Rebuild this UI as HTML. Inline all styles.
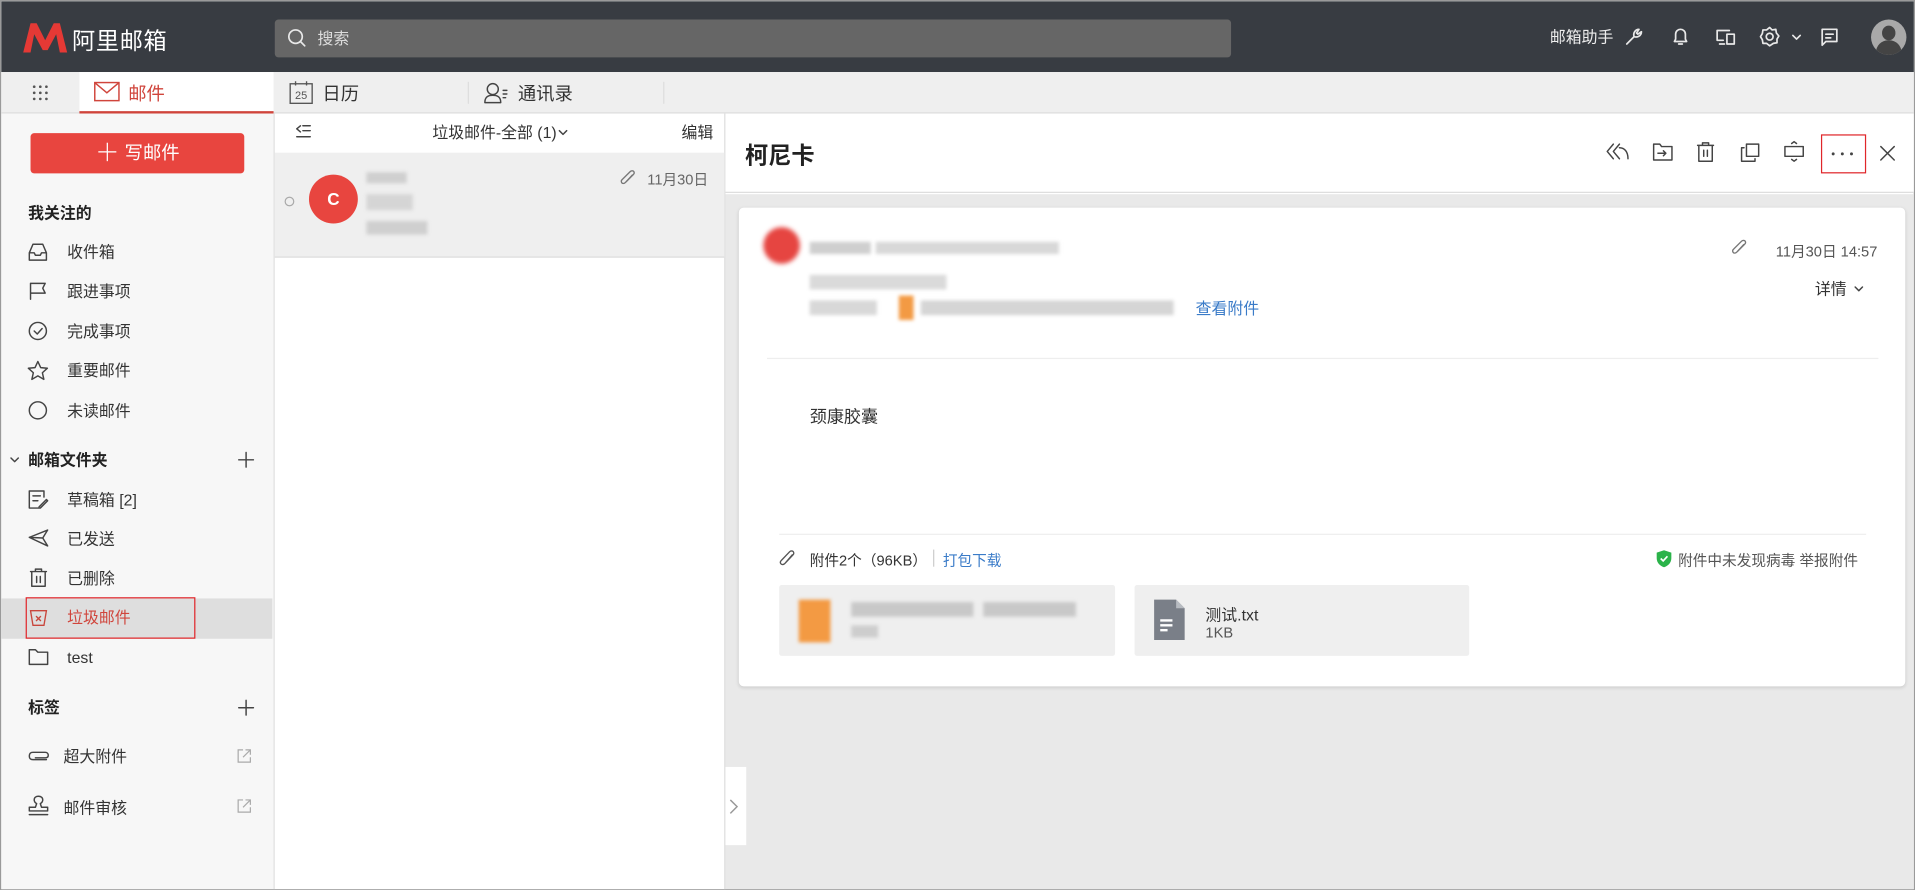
<!DOCTYPE html>
<html><head><meta charset="utf-8"><style>
*{box-sizing:border-box;margin:0;padding:0}
html,body{width:1915px;height:890px;overflow:hidden;background:#fff}
body{font-family:"Liberation Sans","Noto Sans CJK SC",sans-serif;color:#333}
#w{position:absolute;left:0;top:0;width:1568px;height:729px;transform:scale(1.2213);transform-origin:0 0;border:1px solid #9a9a9a;overflow:hidden;background:#fff}
.a{position:absolute}
svg{position:absolute;overflow:visible}
.ic{fill:none;stroke:#444;stroke-width:1.2;stroke-linecap:round;stroke-linejoin:round}
.hi{fill:none;stroke:#e8e8e8;stroke-width:1.4;stroke-linecap:round;stroke-linejoin:round}
.t13{font-size:13px;line-height:16px}
.blur{background:#cfcfcf;filter:blur(1.5px)}
</style></head><body><div id="w">
<!-- header -->
<div class="a" style="left:0;top:0;width:1568px;height:58px;background:#383c42"></div>
<svg style="left:18px;top:18px" width="36" height="24"><path d="M0 24 L6 0 L11 0 L18 14 L25 0 L30 0 L36 24 L30 24 L27 9 L20 22 L16 22 L9 9 L6 24Z" fill="#e53935"/></svg>
<div class="a" style="left:58px;top:18px;color:#fff;font-size:19px;font-weight:normal;letter-spacing:0.5px">阿里邮箱</div>
<div class="a" style="left:224px;top:15px;width:783px;height:31px;background:#666;border-radius:3px"></div>
<svg style="left:234px;top:22px" width="16" height="16"><circle cx="7" cy="7" r="5.5" class="hi"/><path d="M11 11 L14.5 14.5" class="hi"/></svg>
<div class="a t13" style="left:259px;top:23px;color:#ddd">搜索</div>
<div class="a t13" style="left:1268px;top:22px;color:#eee">邮箱助手</div>
<svg style="left:1328px;top:21px" width="16" height="16"><path d="M3 14 L9 8 M9 8 C8 5 10 2 13 2 L11 5 L12 6 L15 4 C15 7 12 9 9 8" class="hi"/></svg>
<svg style="left:1367px;top:21px" width="16" height="16"><path d="M3 12 L13 12 L12 10 L12 6 C12 3.5 10 2 8 2 C6 2 4 3.5 4 6 L4 10Z M6.5 14 L9.5 14" class="hi"/></svg>
<svg style="left:1403px;top:21px" width="18" height="16"><path d="M12 3 L2 3 L2 11 L7 11 M4 14 L8 14 M10 6 L16 6 L16 14 L10 14Z" class="hi"/></svg>
<svg style="left:1439px;top:20px" width="18" height="18"><circle cx="9" cy="9" r="2.8" class="hi"/><path d="M9 1.5 L11 3.5 L14 3 L14.5 6 L16.5 8.5 L15 11 L15 14 L12 14.5 L9 16.5 L6.5 14.5 L3.5 14.5 L3 11.5 L1.5 9 L3 6.5 L3.5 3.5 L6.5 3.5Z" class="hi"/></svg>
<svg style="left:1466px;top:27px" width="8" height="5"><path d="M1 1 L4 4 L7 1" class="hi"/></svg>
<svg style="left:1489px;top:21px" width="16" height="16"><path d="M2 2 L14 2 L14 12 L5 12 L2 15Z M5 6 L11 6 M5 9 L9 9" class="hi"/></svg>
<div class="a" style="left:1531px;top:15px;width:29px;height:29px;border-radius:50%;background:#a9a9a9;overflow:hidden"><div class="a" style="left:9px;top:5px;width:11px;height:12px;border-radius:50%;background:#444"></div><div class="a" style="left:4px;top:17px;width:21px;height:14px;border-radius:10px 10px 0 0;background:#444"></div></div>
<!-- tab row -->
<div class="a" style="left:0;top:58px;width:1568px;height:34px;background:#efefef;border-bottom:1px solid #dcdcdc"></div>
<svg style="left:25px;top:68px" width="14" height="14"><g fill="#555"><circle cx="2" cy="2" r="1.1"/><circle cx="7" cy="2" r="1.1"/><circle cx="12" cy="2" r="1.1"/><circle cx="2" cy="7" r="1.1"/><circle cx="7" cy="7" r="1.1"/><circle cx="12" cy="7" r="1.1"/><circle cx="2" cy="12" r="1.1"/><circle cx="7" cy="12" r="1.1"/><circle cx="12" cy="12" r="1.1"/></g></svg>
<div class="a" style="left:64px;top:58px;width:159px;height:34px;background:#fff;border-bottom:2px solid #d0453c"></div>
<svg style="left:76px;top:66px" width="21" height="16"><rect x="0.6" y="0.6" width="19.8" height="14.8" fill="none" stroke="#d0453c" stroke-width="1.2"/><path d="M1 1 L10.5 9 L20 1" fill="none" stroke="#d0453c" stroke-width="1.2"/></svg>
<div class="a" style="left:104px;top:65px;font-size:15px;color:#d0453c">邮件</div>
<svg style="left:236px;top:65px" width="20" height="20"><rect x="0.6" y="2.6" width="18" height="16" fill="none" stroke="#555" stroke-width="1.1"/><path d="M5 0.5 L5 4 M14 0.5 L14 4" stroke="#555" stroke-width="1.1"/><text x="9.6" y="15" font-size="9" text-anchor="middle" fill="#555" font-family="Liberation Sans">25</text></svg>
<div class="a" style="left:263px;top:65px;font-size:15px;color:#333">日历</div>
<div class="a" style="left:382px;top:66px;width:1px;height:18px;background:#ddd"></div>
<svg style="left:395px;top:66px" width="22" height="18"><circle cx="7.5" cy="6" r="4.5" class="ic" stroke="#555"/><path d="M1 17 C1 12 4 11 7.5 11 C11 11 14 12 14 17Z" class="ic" stroke="#555"/><path d="M16 7 L19 7 M16 10 L19 10 M16 13 L18 13" class="ic"/></svg>
<div class="a" style="left:423px;top:65px;font-size:15px;color:#333">通讯录</div>
<div class="a" style="left:542px;top:66px;width:1px;height:18px;background:#ddd"></div>
<!-- sidebar -->
<div class="a" style="left:0;top:92px;width:224px;height:637px;background:#f7f7f7;border-right:1px solid #ddd"></div>
<div class="a" style="left:24px;top:108px;width:175px;height:33px;background:#e8453f;border-radius:3px;color:#fff;font-size:15px;line-height:33px;text-align:center"><span style="font-size:20px;vertical-align:-2px;font-weight:300">＋</span> 写邮件</div>
<div class="a t13" style="left:22px;top:166px;font-weight:bold;color:#222">我关注的</div>
<svg style="left:22px;top:198px" width="16" height="15"><path d="M1 8 L1 14 L15 14 L15 8 L12 1 L4 1Z M1 8 L5 8 L6 10 L10 10 L11 8 L15 8" class="ic"/></svg>
<div class="a t13" style="left:54px;top:198px">收件箱</div>
<svg style="left:22px;top:230px" width="16" height="15"><path d="M2 14 L2 1 L14 1 L12 5 L14 9 L2 9" class="ic"/></svg>
<div class="a t13" style="left:54px;top:230px">跟进事项</div>
<svg style="left:22px;top:262px" width="16" height="16"><circle cx="8" cy="8" r="7" class="ic"/><path d="M5 8 L7.5 10.5 L11.5 6" class="ic"/></svg>
<div class="a t13" style="left:54px;top:263px">完成事项</div>
<svg style="left:21px;top:294px" width="18" height="17"><path d="M9 1 L11.3 6 L16.8 6.5 L12.7 10.2 L13.9 15.6 L9 12.8 L4.1 15.6 L5.3 10.2 L1.2 6.5 L6.7 6Z" class="ic"/></svg>
<div class="a t13" style="left:54px;top:295px">重要邮件</div>
<svg style="left:22px;top:327px" width="16" height="16"><circle cx="8" cy="8" r="7" class="ic"/></svg>
<div class="a t13" style="left:54px;top:328px">未读邮件</div>
<svg style="left:7px;top:373px" width="8" height="5"><path d="M1 1 L4 4 L7 1" class="ic"/></svg>
<div class="a t13" style="left:22px;top:368px;font-weight:bold;color:#222">邮箱文件夹</div>
<svg style="left:194px;top:369px" width="13" height="13"><path d="M6.5 0.5 L6.5 12.5 M0.5 6.5 L12.5 6.5" class="ic"/></svg>
<svg style="left:22px;top:400px" width="17" height="16"><path d="M10 15 L1 15 L1 1 L13 1 L13 6 M4 5 L10 5 M4 9 L8 9 M9 14 L15 8 L16 9 L10 15 L9 15Z" class="ic"/></svg>
<div class="a t13" style="left:54px;top:401px">草稿箱 [2]</div>
<svg style="left:22px;top:432px" width="17" height="15"><path d="M16 1 L1 7 L16 14 L12 7.5Z M1 7 L12 7.5" class="ic"/></svg>
<div class="a t13" style="left:54px;top:433px">已发送</div>
<svg style="left:23px;top:464px" width="15" height="16"><path d="M1 3 L14 3 M5 3 L5 1 L10 1 L10 3 M2 3 L2 15 L13 15 L13 3 M6 7 L6 12 M9 7 L9 12" class="ic"/></svg>
<div class="a t13" style="left:54px;top:465px">已删除</div>
<div class="a" style="left:0;top:489px;width:222px;height:33px;background:#dedede"></div>
<div class="a" style="left:20px;top:488px;width:139px;height:34px;border:1.5px solid #e0262a"></div>
<svg style="left:23px;top:497px" width="15" height="15"><path d="M1 2 L14 2 L12 14 L3 14Z M5.5 6.5 L9.5 10.5 M9.5 6.5 L5.5 10.5" fill="none" stroke="#c9463c" stroke-width="1.1"/></svg>
<div class="a t13" style="left:54px;top:497px;color:#d0453c">垃圾邮件</div>
<svg style="left:22px;top:530px" width="17" height="14"><path d="M1 1 L6 1 L8 3 L16 3 L16 13 L1 13Z" class="ic"/></svg>
<div class="a t13" style="left:54px;top:530px">test</div>
<div class="a t13" style="left:22px;top:571px;font-weight:bold;color:#222">标签</div>
<svg style="left:194px;top:572px" width="13" height="13"><path d="M6.5 0.5 L6.5 12.5 M0.5 6.5 L12.5 6.5" class="ic"/></svg>
<svg style="left:22px;top:612px" width="18" height="12"><path d="M15 9 L4 9 C2 9 1 8 1 6 C1 4 2 3 4 3 L14 3 C15.5 3 16.5 4 16.5 5.5 C16.5 7 15.5 7.5 14 7.5 L6 7.5" class="ic"/></svg>
<div class="a t13" style="left:51px;top:611px">超大附件</div>
<svg style="left:193px;top:612px" width="12" height="12"><path d="M5 1 L1 1 L1 11 L11 11 L11 7 M7 1 L11 1 L11 5 M11 1 L5 7" fill="none" stroke="#aaa" stroke-width="1"/></svg>
<svg style="left:22px;top:650px" width="17" height="17"><path d="M1 16 L16 16 M1 13 L16 13 L16 10 L11 10 L10 7 C11.5 6 12 5 12 4 C12 2 10.5 1 8.5 1 C6.5 1 5 2 5 4 C5 5 5.5 6 7 7 L6 10 L1 10Z" class="ic"/></svg>
<div class="a t13" style="left:51px;top:653px">邮件审核</div>
<svg style="left:193px;top:653px" width="12" height="12"><path d="M5 1 L1 1 L1 11 L11 11 L11 7 M7 1 L11 1 L11 5 M11 1 L5 7" fill="none" stroke="#aaa" stroke-width="1"/></svg>
<!-- list -->
<div class="a" style="left:224px;top:92px;width:369px;height:637px;background:#fff;border-right:1px solid #ddd"></div>
<svg style="left:241px;top:101px" width="13" height="12"><path d="M4 1 L1 3.5 L4 6 M6 1 L12 1 M6 5 L12 5 M1 10 L12 10" class="ic"/></svg>
<div class="a t13" style="left:353px;top:100px">垃圾邮件-全部 (1)</div>
<svg style="left:456px;top:105px" width="8" height="5"><path d="M1 1 L4 4 L7 1" class="ic"/></svg>
<div class="a t13" style="left:557px;top:100px">编辑</div>
<div class="a" style="left:224px;top:124px;width:368px;height:86px;background:#efefef;border-bottom:1px solid #ddd"></div>
<div class="a" style="left:232px;top:160px;width:8px;height:8px;border:1px solid #aaa;border-radius:50%"></div>
<div class="a" style="left:252px;top:142px;width:40px;height:40px;border-radius:50%;background:#e8453f;color:#fff;font-weight:bold;font-size:14px;line-height:40px;text-align:center">C</div>
<div class="a blur" style="left:299px;top:140px;width:33px;height:9px"></div>
<div class="a blur" style="left:299px;top:158px;width:38px;height:13px;background:#d5d5d5"></div>
<div class="a blur" style="left:299px;top:180px;width:50px;height:11px"></div>
<svg style="left:506px;top:138px" width="14" height="14"><path d="M11 4 L5 10.5 C4 11.5 2.5 11.5 2 10.5 C1.5 9.5 1.8 8.5 2.5 8 L9 1.5 C10 0.5 11.5 0.8 12 1.5 C12.5 2.5 12.3 3.3 11.5 4 L5.5 10" fill="none" stroke="#777" stroke-width="1.1"/></svg>
<div class="a" style="left:529px;top:137px;font-size:12px;color:#666">11月30日</div>
<!-- reader -->
<div class="a" style="left:593px;top:92px;width:975px;height:65px;background:#fff;border-bottom:1px solid #ddd"></div>
<div class="a" style="left:609px;top:112px;font-size:19px;font-weight:bold;color:#222">柯尼卡</div>
<svg style="left:1314px;top:116px" width="19" height="16"><path d="M6 1 L1 7 L6 13 M11 1 L6 7 L11 13 M11 4 C15 4 18 7 18 13" class="ic"/></svg>
<svg style="left:1352px;top:116px" width="17" height="15"><path d="M1 1 L6 1 L7.5 3 L16 3 L16 14 L1 14Z M4.5 8.5 L11 8.5 M9 6.5 L11 8.5 L9 10.5" class="ic"/></svg>
<svg style="left:1388px;top:115px" width="15" height="17"><path d="M1 3 L14 3 M5 3 L5 1 L10 1 L10 3 M2 3 L2 16 L13 16 L13 3 M6 7 L6 12 M9 7 L9 12" class="ic"/></svg>
<svg style="left:1424px;top:116px" width="16" height="16"><path d="M5 1 L15 1 L15 11 L5 11Z M3 4 L1 4 L1 15 L12 15 L12 13" class="ic"/></svg>
<svg style="left:1459px;top:114px" width="18" height="18"><path d="M1.5 5 L16.5 5 L16.5 13 L1.5 13Z M7 2.5 L9 1 L11 2.5 M7 15.5 L9 17 L11 15.5" class="ic"/></svg>
<div class="a" style="left:1490px;top:109px;width:37px;height:32px;border:1.5px solid #e0262a"></div>
<svg style="left:1498px;top:123px" width="20" height="4"><g fill="#444"><circle cx="2" cy="2" r="1.2"/><circle cx="9.5" cy="2" r="1.2"/><circle cx="17" cy="2" r="1.2"/></g></svg>
<svg style="left:1538px;top:118px" width="13" height="13"><path d="M1 1 L12 12 M12 1 L1 12" class="ic" stroke-width="1.4"/></svg>
<div class="a" style="left:593px;top:158px;width:975px;height:571px;background:#e9e9e9"></div>
<div class="a" style="left:593px;top:627px;width:17px;height:64px;background:#fff"></div>
<svg style="left:596px;top:653px" width="8" height="13"><path d="M1 1 L6.5 6.5 L1 12" fill="none" stroke="#999" stroke-width="1.2"/></svg>
<!-- card -->
<div class="a" style="left:604px;top:169px;width:955px;height:392px;background:#fff;border-radius:4px;box-shadow:0 1px 3px rgba(0,0,0,.12)"></div>
<div class="a" style="left:624px;top:185px;width:30px;height:30px;border-radius:50%;background:#e64541;filter:blur(2px)"></div>
<div class="a blur" style="left:662px;top:197px;width:50px;height:10px"></div>
<div class="a blur" style="left:716px;top:197px;width:150px;height:10px;background:#d8d8d8"></div>
<div class="a blur" style="left:662px;top:224px;width:112px;height:12px;background:#dadada"></div>
<div class="a blur" style="left:662px;top:245px;width:55px;height:12px;background:#d8d8d8"></div>
<div class="a" style="left:735px;top:241px;width:12px;height:20px;background:#f39a43;filter:blur(1.5px)"></div>
<div class="a blur" style="left:753px;top:245px;width:207px;height:12px;background:#d5d5d5"></div>
<div class="a t13" style="left:978px;top:244px;color:#3a7bc8">查看附件</div>
<svg style="left:1416px;top:195px" width="14" height="14"><path d="M11 4 L5 10.5 C4 11.5 2.5 11.5 2 10.5 C1.5 9.5 1.8 8.5 2.5 8 L9 1.5 C10 0.5 11.5 0.8 12 1.5 C12.5 2.5 12.3 3.3 11.5 4 L5.5 10" fill="none" stroke="#777" stroke-width="1.1"/></svg>
<div class="a" style="left:1453px;top:196px;font-size:12px;color:#555">11月30日 14:57</div>
<div class="a t13" style="left:1485px;top:228px;color:#333">详情</div>
<svg style="left:1517px;top:233px" width="8" height="5"><path d="M1 1 L4 4 L7 1" class="ic"/></svg>
<div class="a" style="left:627px;top:292px;width:910px;height:1px;background:#eee"></div>
<div class="a" style="left:662px;top:330px;font-size:14px;color:#333">颈康胶囊</div>
<div class="a" style="left:637px;top:436px;width:890px;height:1px;background:#eee"></div>
<svg style="left:636px;top:449px" width="15" height="15"><path d="M12 4 L5.5 11.5 C4.5 12.5 3 12.5 2.3 11.5 C1.7 10.5 2 9.5 2.8 8.8 L9.5 1.8 C10.5 0.8 12 1 12.6 1.8 C13.2 2.8 13 3.7 12.2 4.5 L6 11" fill="none" stroke="#555" stroke-width="1.1"/></svg>
<div class="a" style="left:662px;top:449px;font-size:12px;color:#333">附件2个（96KB）</div>
<div class="a" style="left:763px;top:449px;width:1px;height:14px;background:#ccc"></div>
<div class="a" style="left:771px;top:449px;font-size:12px;color:#3a7bc8">打包下载</div>
<svg style="left:1355px;top:449px" width="13" height="15"><path d="M6.5 0.5 L12.5 2.5 L12.5 7 C12.5 11 9.5 13.5 6.5 14.5 C3.5 13.5 0.5 11 0.5 7 L0.5 2.5Z" fill="#2bb34a"/><path d="M3.8 7.3 L5.8 9.3 L9.3 5.5" fill="none" stroke="#fff" stroke-width="1.4"/></svg>
<div class="a" style="left:1373px;top:449px;font-size:12px;color:#555">附件中未发现病毒 举报附件</div>
<div class="a" style="left:637px;top:478px;width:275px;height:58px;background:#efefef;border-radius:2px"></div>
<div class="a" style="left:653px;top:490px;width:26px;height:35px;background:#f39a43;filter:blur(1.5px)"></div>
<div class="a blur" style="left:696px;top:492px;width:100px;height:12px;background:#c8c8c8"></div>
<div class="a blur" style="left:804px;top:492px;width:76px;height:12px;background:#c8c8c8"></div>
<div class="a blur" style="left:696px;top:511px;width:22px;height:10px;background:#cdcdcd"></div>
<div class="a" style="left:928px;top:478px;width:274px;height:58px;background:#efefef;border-radius:2px"></div>
<svg style="left:944px;top:490px" width="25" height="33"><path d="M0 0 L18 0 L25 7 L25 33 L0 33Z" fill="#7a7f88"/><path d="M18 0 L25 7 L18 7Z" fill="#b7bbc1"/><path d="M5 17 L15 17 M5 21 L15 21 M5 25 L11 25" stroke="#fff" stroke-width="2"/></svg>
<div class="a" style="left:986px;top:492px;font-size:13px;color:#333">测试.txt</div>
<div class="a" style="left:986px;top:510px;font-size:12px;color:#555">1KB</div>
</div></body></html>
